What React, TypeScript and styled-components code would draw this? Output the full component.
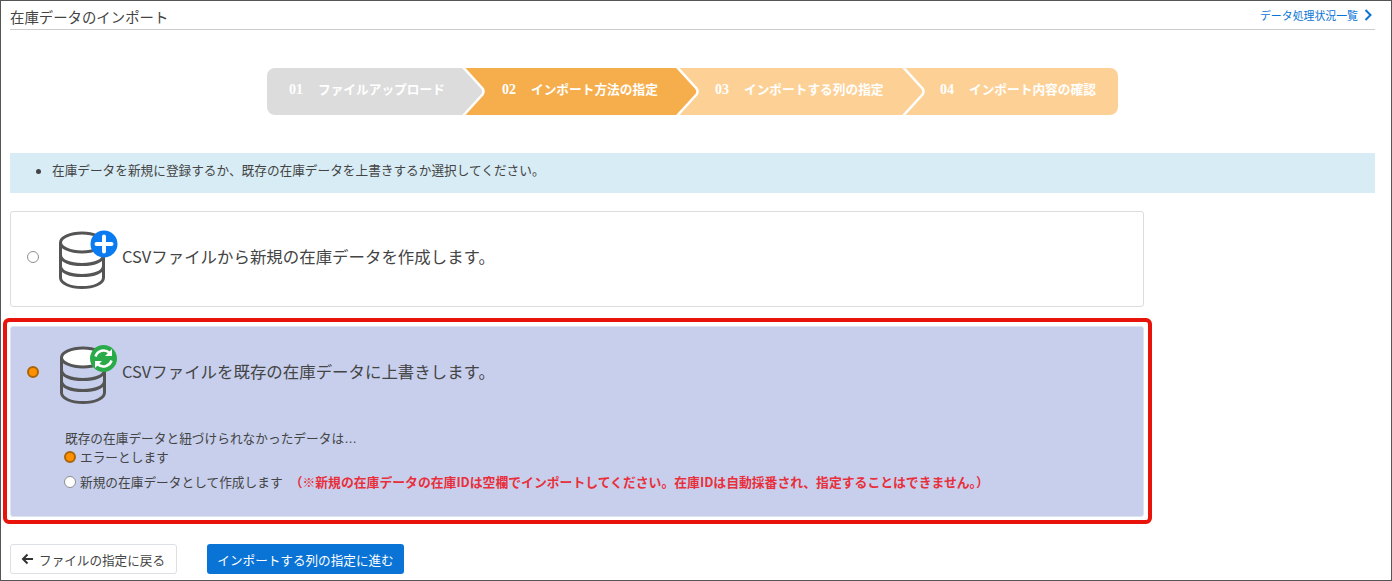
import React from "react";
import styled, { createGlobalStyle } from "styled-components";

const Global = createGlobalStyle`
  html, body { margin: 0; padding: 0; background: #fff; }
  body { font-family: "Noto Sans CJK JP", "Liberation Sans", sans-serif; color: #444; }
  * { box-sizing: border-box; }
`;

const Frame = styled.div`
  width: 1392px;
  height: 581px;
  border: 1px solid #555;
  padding: 0 16px 0 9px;
  overflow: hidden;
`;
const Header = styled.header`
  height: 29px;
  border-bottom: 1px solid #ccc;
  display: flex;
  justify-content: space-between;
  align-items: flex-start;
`;
const Title = styled.h1`
  margin: 5px 0 0;
  font-size: 14.4px;
  line-height: 22px;
  font-weight: 400;
  color: #444;
`;
const HeadLink = styled.a`
  margin: 4px 3px 0 0;
  font-size: 10.9px;
  line-height: 20px;
  color: #0a74d6;
  display: flex;
  align-items: center;
  gap: 6px;
`;
const Stepper = styled.ol`
  list-style: none;
  margin: 38px 0 0 257px;
  padding: 0;
  width: 851px;
  height: 47px;
  display: flex;
  border-radius: 8px;
  overflow: hidden;
`;
const Step = styled.li<{ $w: number; $bg: string; $pad: number }>`
  width: ${(p) => p.$w}px;
  flex: none;
  position: relative;
  background: ${(p) => p.$bg};
  color: #fff;
  font-size: 12.7px;
  font-weight: 700;
  line-height: 42px;
  padding-left: ${(p) => p.$pad}px;
  white-space: nowrap;
`;
const StepLabel = styled.span`
  position: relative;
  z-index: 3;
`;
const StepNum = styled.span`
  font-family: "Liberation Serif", serif;
  font-size: 14px;
  margin-right: 15px;
`;
const Chevron = styled.svg`
  position: absolute;
  top: 0;
  left: 100%;
  margin-left: -1px;
  width: 25px;
  height: 47px;
  z-index: 2;
`;
const Alert = styled.div`
  margin-top: 38px;
  height: 40px;
  background: #d8ecf5;
  padding: 7px 0 0 42px;
  font-size: 12.67px;
  line-height: 20px;
  color: #444;
  position: relative;
  &::before {
    content: "";
    position: absolute;
    left: 26px;
    top: 16px;
    width: 5px;
    height: 5px;
    border-radius: 50%;
    background: #444;
  }
`;
const Card = styled.section<{ $active?: boolean }>`
  width: 1134px;
  margin-top: ${(p) => (p.$active ? 19 : 18)}px;
  height: ${(p) => (p.$active ? 191 : 96)}px;
  border: 1px solid ${(p) => (p.$active ? "#dfe3ee" : "#dcdcdc")};
  border-radius: 3px;
  background: ${(p) => (p.$active ? "#c7cfec" : "#fff")};
  position: relative;
`;
const Callout = styled.div`
  position: absolute;
  inset: -9px -9px -8px -8px;
  border: 4px solid #e8140c;
  border-radius: 6px;
  pointer-events: none;
`;
const Row = styled.div`
  height: 90px;
  display: flex;
  align-items: center;
  padding: 0 0 0 16px;
`;
const Big = styled.span`
  font-size: 16.44px;
  line-height: 24px;
  margin: -2px 0 0 2px;
  color: #444;
`;
const IconWrap = styled.svg<{ $sync: boolean }>`
  margin: 6px ${(p) => (p.$sync ? -1 : 0)}px 0 ${(p) => (p.$sync ? 20 : 19)}px;
  width: 62px;
  height: 62px;
  flex: none;
`;
const Radio = styled.span<{ $on?: boolean }>`
  display: inline-block;
  flex: none;
  width: 12px;
  height: 12px;
  border-radius: 50%;
  border: ${(p) => (p.$on ? "2px solid #a8650a" : "1px solid #8f8f8f")};
  background: ${(p) => (p.$on ? "#ff9000" : "#fff")};
`;
const Options = styled.div`
  margin: 12px 0 0 53px;
  font-size: 12.7px;
  line-height: 18px;
  color: #444;
`;
const Lead = styled.div`
  padding-left: 1px;
`;
const Ellipsis = styled.span`
  font-family: "Liberation Sans", sans-serif;
`;
const OptionRow = styled.div<{ $gap: number }>`
  display: flex;
  align-items: center;
  gap: 4px;
  height: 18px;
  margin-top: ${(p) => p.$gap}px;
`;
const Warn = styled.strong`
  color: #e8303c;
  font-weight: 700;
  font-size: 12.83px;
  margin-left: 3px;
`;
const Actions = styled.div`
  margin-top: 27px;
  display: flex;
  gap: 30px;
`;
const BackBtn = styled.button`
  width: 167px;
  height: 30px;
  background: #fff;
  border: 1px solid #dcdfe4;
  border-radius: 3px;
  font: 400 12.6px "Noto Sans CJK JP", sans-serif;
  color: #444;
  display: flex;
  align-items: center;
  justify-content: center;
  gap: 5px;
  padding: 0 1px 0 0;
`;
const NextBtn = styled.button`
  width: 197px;
  height: 30px;
  background: #0a74d6;
  border: none;
  border-radius: 3px;
  font: 400 12.6px "Noto Sans CJK JP", sans-serif;
  color: #fff;
  padding: 0;
`;

const Chev = ({ fill }: { fill: string }) => (
  <Chevron viewBox="0 0 25 47">
    <path d="M0 -2 L20.5 20.5 Q22.5 23.5 20.5 26.5 L0 49" fill={fill} stroke="#fff" strokeWidth="2.5" />
  </Chevron>
);

const Db = ({ badge }: { badge: "plus" | "sync" }) => (
  <IconWrap viewBox="0 0 62 62" $sync={badge === "sync"}>
    <g fill="none" stroke="#555" strokeWidth="3">
      <ellipse cx="24" cy="13.5" rx="21.5" ry="9.5" fill="#fff" />
      <path d="M2.5 13.5 V48.5 C2.5 54.5 12 58.5 24 58.5 S45.5 54.5 45.5 48.5 V13.5" />
      <path d="M2.5 26 C2.5 32 12 35.5 24 35.5 S45.5 32 45.5 26" />
      <path d="M2.5 37 C2.5 43 12 46.5 24 46.5 S45.5 43 45.5 37" />
    </g>
    {badge === "plus" ? (
      <>
        <circle cx="46" cy="15" r="13.5" fill="#0a7bf0" />
        <path d="M46 7.5 V22.5 M38.5 15 H53.5" stroke="#fff" strokeWidth="4" strokeLinecap="round" />
      </>
    ) : (
      <>
        <circle cx="44.5" cy="14.5" r="13.5" fill="#2aab49" />
        <path d="M36.5 12.5 A8.5 8.5 0 0 1 50.5 9 M52.5 16.5 A8.5 8.5 0 0 1 38.5 20" fill="none" stroke="#fff" strokeWidth="2.6" />
        <path d="M53 5 V12 H46 Z M36 24 V17 H43 Z" fill="#fff" />
      </>
    )}
  </IconWrap>
);

export default function App() {
  return (
    <>
      <Global />
      <Frame>
        <Header>
          <Title>在庫データのインポート</Title>
          <HeadLink>
            データ処理状況一覧
            <svg width="8" height="12" viewBox="0 0 8 12">
              <path d="M1.5 1 L6.5 6 L1.5 11" fill="none" stroke="#0a74d6" strokeWidth="2" />
            </svg>
          </HeadLink>
        </Header>
        <Stepper>
          <Step $w={196} $bg="#dcdcdc" $pad={22}>
            <StepLabel><StepNum>01</StepNum>ファイルアップロード</StepLabel>
            <Chev fill="#dcdcdc" />
          </Step>
          <Step $w={214} $bg="#f6ae4c" $pad={39}>
            <StepLabel><StepNum>02</StepNum>インポート方法の指定</StepLabel>
            <Chev fill="#f6ae4c" />
          </Step>
          <Step $w={226} $bg="#fdd196" $pad={38}>
            <StepLabel><StepNum>03</StepNum>インポートする列の指定</StepLabel>
            <Chev fill="#fdd196" />
          </Step>
          <Step $w={215} $bg="#fdd196" $pad={37}>
            <StepLabel><StepNum>04</StepNum>インポート内容の確認</StepLabel>
          </Step>
        </Stepper>
        <Alert>在庫データを新規に登録するか、既存の在庫データを上書きするか選択してください。</Alert>
        <Card>
          <Row>
            <Radio />
            <Db badge="plus" />
            <Big>CSVファイルから新規の在庫データを作成します。</Big>
          </Row>
        </Card>
        <Card $active>
          <Callout />
          <Row>
            <Radio $on />
            <Db badge="sync" />
            <Big>CSVファイルを既存の在庫データに上書きします。</Big>
          </Row>
          <Options>
            <Lead>既存の在庫データと紐づけられなかったデータは<Ellipsis>…</Ellipsis></Lead>
            <OptionRow $gap={0}>
              <Radio $on />
              エラーとします
            </OptionRow>
            <OptionRow $gap={7}>
              <Radio />
              新規の在庫データとして作成します
              <Warn>（※新規の在庫データの在庫IDは空欄でインポートしてください。在庫IDは自動採番され、指定することはできません。）</Warn>
            </OptionRow>
          </Options>
        </Card>
        <Actions>
          <BackBtn>
            <svg width="13" height="12" viewBox="0 0 13 12">
              <path d="M12 6 H2 M6.5 1.5 L2 6 L6.5 10.5" fill="none" stroke="#333" strokeWidth="2" />
            </svg>
            ファイルの指定に戻る
          </BackBtn>
          <NextBtn>インポートする列の指定に進む</NextBtn>
        </Actions>
      </Frame>
    </>
  );
}
